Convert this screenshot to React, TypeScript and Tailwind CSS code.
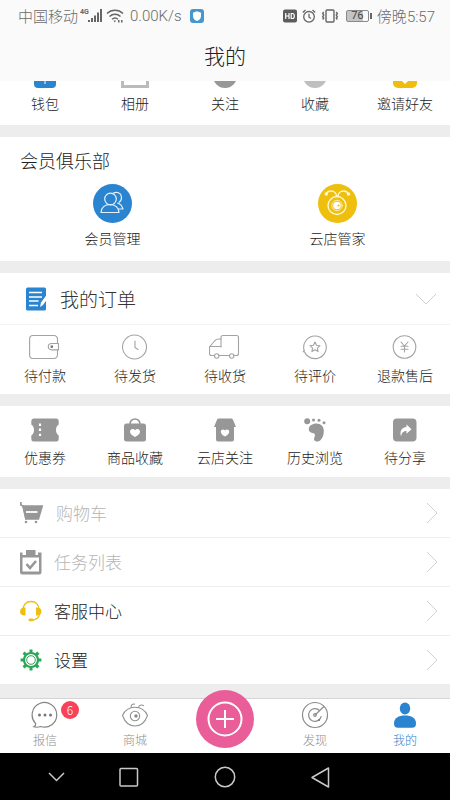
import type { ReactNode } from "react";

type Entry = { label: string; icon: ReactNode };

const line = {
  fill: "none",
  stroke: "#a3a3a3",
  strokeWidth: 1.1,
  strokeLinecap: "round",
  strokeLinejoin: "round",
} as const;

const shortcuts: Entry[] = [
  {
    label: "钱包",
    icon: (
      <svg width="22" height="22" viewBox="0 0 22 22">
        <rect width="22" height="22" rx="4" fill="#2b84d0" />
        <path d="M11 13v5" stroke="#fff" strokeWidth="1" />
      </svg>
    ),
  },
  {
    label: "相册",
    icon: (
      <svg width="28" height="22" viewBox="0 0 28 22">
        <rect x="1.5" y="1.5" width="25" height="19" fill="none" stroke="#bbb" strokeWidth="3" />
      </svg>
    ),
  },
  {
    label: "关注",
    icon: (
      <svg width="24" height="24" viewBox="0 0 24 24">
        <circle cx="12" cy="12" r="12" fill="#979797" />
      </svg>
    ),
  },
  {
    label: "收藏",
    icon: (
      <svg width="24" height="24" viewBox="0 0 24 24">
        <circle cx="12" cy="12" r="12" fill="#bfbfbf" />
      </svg>
    ),
  },
  {
    label: "邀请好友",
    icon: (
      <svg width="24" height="24" viewBox="0 0 24 24">
        <rect width="24" height="24" rx="5" fill="#f0bd0c" />
        <path d="M8 16l4 4 4-4z" fill="#fff" />
      </svg>
    ),
  },
];

const club: Entry[] = [
  {
    label: "会员管理",
    icon: (
      <svg width="40" height="40" viewBox="0 0 40 40">
        <circle cx="19.5" cy="20.5" r="19.5" fill="#2b84d0" />
        <g fill="none" stroke="#e4f1fc" strokeWidth="1.2" strokeLinejoin="round">
          <circle cx="17.500" cy="16" r="5.8" />
          <path d="M8 29.5c0-5 4-8 9-8s9 3 9 8z" />
          <path d="M20 10.3c1.2-.8 2.2-1 3.5-1 3 0 5 2.6 5 5.4 0 2.2-1 3.8-2.7 4.8M24.300 20c3.5.8 4.8 3 5.7 6h-4.8" />
        </g>
      </svg>
    ),
  },
  {
    label: "云店管家",
    icon: (
      <svg width="40" height="40" viewBox="0 0 40 40">
        <circle cx="19.5" cy="20.5" r="19.5" fill="#eebf0d" />
        <g fill="none" stroke="#fff6d2" strokeWidth="1.4" strokeLinecap="round">
          <circle cx="19" cy="22.5" r="9" />
          <circle cx="19" cy="22.5" r="5.2" strokeWidth=".8" />
          <path d="M18.500 13.5c0-3.500-2.500-5.500-5.500-5.500-2.500 0-4 1-5 3M20 13.500c0-3.500 2.500-5.500 5.500-5.500 2.500 0 4 1 5 3" />
        </g>
        <circle cx="19" cy="22.500" r="3.800" fill="#fff" />
        <circle cx="20.500" cy="22.500" r="1.100" fill="#eebf0d" />
        <circle cx="8.300" cy="11" r="1.800" fill="#fff6d2" />
        <circle cx="30.500" cy="11" r="1.800" fill="#fff6d2" />
      </svg>
    ),
  },
];

const orders: Entry[] = [
  {
    label: "待付款",
    icon: (
      <svg width="32" height="26" viewBox="0 0 32 26" {...line}>
        <path d="M28.500 9.500V5a3.500 3.500 0 0 0-3.500-3.500H4A3.500 3.500 0 0 0 .6 5v16A3.500 3.500 0 0 0 4 24.500h21a3.500 3.500 0 0 0 3.500-3.500v-5" />
        <path d="M29.500 9.500h-7a3.200 3.200 0 0 0 0 6.400h7z" />
        <circle cx="22.800" cy="12.700" r=".8" fill="#777" stroke="#777" />
      </svg>
    ),
  },
  {
    label: "待发货",
    icon: (
      <svg width="26" height="26" viewBox="0 0 26 26" {...line}>
        <circle cx="12.500" cy="13" r="12" />
        <path d="M13 7v6.500l3 2" />
      </svg>
    ),
  },
  {
    label: "待收货",
    icon: (
      <svg width="32" height="26" viewBox="0 0 32 26" {...line}>
        <path d="M5.500 21.500H2.500a2 2 0 0 1-2-2V13L6 6.500c1-1 2-1.500 3.500-1.500H12" />
        <path d="M12 13V3.500a2 2 0 0 1 2-2h13.500a2 2 0 0 1 2 2v16a2 2 0 0 1-2 2H25M10 21.500h10.500M.5 12.500H12" />
        <circle cx="7.700" cy="22" r="2.200" />
        <circle cx="22.700" cy="22" r="2.200" />
      </svg>
    ),
  },
  {
    label: "待评价",
    icon: (
      <svg width="26" height="26" viewBox="0 0 26 26" {...line}>
        <path d="M2.300 17A11.300 11.300 0 1 1 6 22.200C4.500 21 3.200 19.500 2.700 18.200c-.3-.5-.8-.6-1.500-.5.800-.6 1-1.500.8-2.700" />
        <path d="m13 8 1.500 3.300 3.500.4-2.600 2.400.7 3.500-3.100-1.800-3.100 1.800.7-3.500L8 11.700l3.500-.4z" />
      </svg>
    ),
  },
  {
    label: "退款售后",
    icon: (
      <svg width="26" height="26" viewBox="0 0 26 26" {...line}>
        <circle cx="12.500" cy="13" r="11.300" />
        <path d="m9 8 3.500 4L16 8M12.500 12v6M9 12.200h7M9 15.200h7" />
      </svg>
    ),
  },
];

const tools: Entry[] = [
  {
    label: "优惠券",
    icon: (
      <svg width="28" height="24" viewBox="0 0 28 24">
        <path d="M3 .5h22A2.500 2.500 0 0 1 27.700 3v3.500C26 7.500 25 9.500 25 12s1 4.500 2.700 5.500V21a2.500 2.500 0 0 1-2.700 2.500H3A2.500 2.500 0 0 1 .3 21v-3.500C2 16.500 3 14.500 3 12S2 7.500.3 6.500V3A2.500 2.500 0 0 1 3 .5z" fill="#979797" />
        <path d="M9 5.500v2.400M9 10.600V13M9 15.700v2.400" stroke="#fff" strokeWidth="2.200" />
      </svg>
    ),
  },
  {
    label: "商品收藏",
    icon: (
      <svg width="22" height="24" viewBox="0 0 22 24">
        <path d="M6 7.500V6a5 5 0 0 1 10 0v1.500" fill="none" stroke="#979797" strokeWidth="1.700" />
        <rect y="5.500" width="22" height="18" rx="2.500" fill="#979797" />
        <path d="M11 19c-3-1.600-5-3.200-5-5.300 0-2.800 3.500-3.500 5-1.400 1.500-2.100 5-1.400 5 1.400 0 2.100-2 3.700-5 5.300z" fill="#fff" />
      </svg>
    ),
  },
  {
    label: "云店关注",
    icon: (
      <svg width="22" height="24" viewBox="0 0 22 24">
        <path d="M5 .5h12a2 2 0 0 1 2 1.200L22 9h-2v12.500a2 2 0 0 1-2 2H4a2 2 0 0 1-2-2V9H0l3-7.300A2 2 0 0 1 5 .5z" fill="#979797" />
        <path d="M11 18.500c-2.600-1.500-4.200-2.900-4.200-4.800 0-2.400 3-3 4.200-1.200 1.200-1.800 4.200-1.200 4.200 1.200 0 1.900-1.600 3.300-4.200 4.800z" fill="#fff" />
      </svg>
    ),
  },
  {
    label: "历史浏览",
    icon: (
      <svg width="22" height="24" viewBox="0 0 22 24" fill="#979797">
        <circle cx="3.200" cy="3.200" r="3" />
        <circle cx="9.500" cy="2" r="1.500" />
        <circle cx="15" cy="2.300" r="1.500" />
        <circle cx="20" cy="4.800" r="1.500" />
        <path d="M12.500 5.500c4.500 0 7.300 3 7.300 7.200 0 4-.8 6.500-2.800 8.800-1.500 1.800-3.500 2.400-5.300 1.800-2-.7-2-2.600-1.200-4.300.7-1.500.8-3.300-1-3.800-2.500-.5-4.700-1.200-4.700-4 0-3.500 3.700-5.700 7.700-5.700z" />
      </svg>
    ),
  },
  {
    label: "待分享",
    icon: (
      <svg width="24" height="24" viewBox="0 0 24 24">
        <rect y=".5" width="23.500" height="23" rx="4" fill="#979797" />
        <path d="M8 18.500c-1.500-5.500.5-9 5.500-9.500V6.500l5 4.700-5 4.500v-2.800c-3 0-4.800 1.600-5.500 5.600z" fill="#fff" />
      </svg>
    ),
  },
];

const rows: (Entry & { muted?: boolean })[] = [
  {
    label: "购物车",
    muted: true,
    icon: (
      <svg width="24" height="22" viewBox="0 0 24 22">
        <path d="M.9 0v3l2.200 1L6 17.500" fill="none" stroke="#979797" strokeWidth="1.700" />
        <path d="M2 3.200h21.300l-4.300 14.500H5.500z" fill="#979797" />
        <path d="M6 10h11.500" stroke="#fff" strokeWidth="1.800" />
        <circle cx="6" cy="20" r="1.300" fill="#979797" />
        <circle cx="16" cy="20" r="1.300" fill="#979797" />
      </svg>
    ),
  },
  {
    label: "任务列表",
    muted: true,
    icon: (
      <svg width="22" height="26" viewBox="0 0 22 26">
        <path d="M0 3.500h2.500V6h3.500V1h9.500v5H18V3.500h3.500V23a2.500 2.500 0 0 1-2.500 2.500H2.500A2.500 2.500 0 0 1 0 23z" fill="#979797" />
        <path d="M2.500 8.500h16.500v14H2.500z" fill="#fff" />
        <path d="m6.500 15 3.500 4 6-7" fill="none" stroke="#979797" strokeWidth="2.600" />
      </svg>
    ),
  },
  {
    label: "客服中心",
    icon: (
      <svg width="22" height="22" viewBox="0 0 22 22" fill="#ebc012">
        <path d="M3 10C3 4.500 6.300 1.500 11 1.500S19 4.500 19 10M19.500 14c-.7 4-3.500 6-8 6" fill="none" stroke="#ebc012" strokeWidth="1.400" />
        <path d="M5.500 7.500v8C2.500 16 0 14.500 0 11.500s2.500-4.500 5.500-4zM16 7.500v8c3 .5 5.500-1 5.500-4s-2.500-4.500-5.500-4z" />
        <rect x="8.500" y="18.500" width="5" height="2.800" rx="1.400" />
      </svg>
    ),
  },
  {
    label: "设置",
    icon: (
      <svg width="22" height="22" viewBox="0 0 22 22" fill="none" stroke="#2aa757">
        <circle cx="11" cy="11" r="7" strokeWidth="2.200" />
        <circle cx="11" cy="11" r="4.300" strokeWidth="1" />
        <path
          d="M11 .6v3.200M11 18.200v3.200M.6 11h3.200M18.200 11h3.200M3.600 3.600l2.300 2.300M16.100 16.100l2.300 2.300M3.600 18.400l2.300-2.300M16.100 5.900l2.300-2.300"
          strokeWidth="3"
        />
      </svg>
    ),
  },
];

const IconCell = ({ label, icon }: Entry) => (
  <button type="button" className="flex flex-col items-center justify-end gap-[5px]">
    {icon}
    <span className="text-sm leading-5">{label}</span>
  </button>
);

const StatusBar = () => (
  <div className="flex h-8 items-center justify-between pl-[18px] pr-[15px] text-[15px] leading-5 text-[#6b6b6b]">
    <div className="flex items-center">
      <span>中国移动</span>
      <svg className="ml-0.5" width="24" height="16" viewBox="0 0 24 16" fill="#666">
        <text x="0" y="6" fontSize="7" fontWeight="700" fontFamily="Roboto">4G</text>
        <path d="M8 12h2v2H8zM11 10h2v4h-2zM14 7.500h2V14h-2zM17 4.500h2V14h-2zM20 1h2v13h-2z" />
      </svg>
      <svg className="ml-0.5" width="18" height="16" viewBox="0 0 18 16">
        <path d="M1 5.500c4.500-4.300 11.500-4.300 16 0M3.500 8.500c3.200-3 7.800-3 11 0M6 11.300c1.800-1.600 4.200-1.600 6 0" fill="none" stroke="#666" strokeWidth="1.500" />
        <path d="M7.500 12.500h2.500L8.800 14.500zM12 12h1.500v2.500H12zM15 12h1.500v2.500H15z" fill="#666" />
      </svg>
      <span className="ml-1.5 font-[Roboto] text-[15px]">0.00K/s</span>
      <svg className="ml-2" width="14" height="14" viewBox="0 0 14 14">
        <rect width="14" height="14" rx="3" fill="#4597cf" />
        <path d="M7 2.200 11 3.700V7c0 2.500-1.700 4.200-4 5-2.300-.8-4-2.500-4-5V3.700z" fill="#fff" />
      </svg>
    </div>
    <div className="flex items-center gap-[5px]">
      <svg width="14" height="14" viewBox="0 0 14 14">
        <rect width="14" height="13" y=".5" rx="2" fill="#5c5c5c" />
        <path d="M2.700 4v6M6 4v6M2.700 7H6M8.200 4.500v5h1.300c1 0 1.800-1 1.800-2.500s-.8-2.500-1.800-2.500z" fill="none" stroke="#fff" strokeWidth="1.200" />
      </svg>
      <svg width="14" height="14" viewBox="0 0 14 14" fill="none" stroke="#666" strokeWidth="1.300">
        <circle cx="7" cy="7.800" r="5.300" />
        <path d="M7 4.800v3.400l2 1.300M.8 3.500l2.700-2.400M13.200 3.500l-2.700-2.400" />
      </svg>
      <svg width="18" height="14" viewBox="0 0 18 14" fill="none" stroke="#666" strokeWidth="1.400">
        <rect x="5" y="1" width="8" height="12" rx="1" />
        <path d="m2.700 3-1 1.500 1 1.500-1 1.500 1 1.500-1 1.500M15.300 3l1 1.500-1 1.500 1 1.500-1 1.500 1 1.500" />
      </svg>
      <div className="ml-0.5 flex items-center gap-px">
        <span className="flex h-3 w-[23px] items-center justify-center rounded-xs border border-[#8a8a8a] bg-linear-to-r from-[#c4c4c4] from-75% to-[#fafafa] to-75% font-[Roboto] text-[11px] font-normal leading-3 text-[#444]">
          76
        </span>
        <span className="h-1.5 w-0.5 bg-[#666]" />
      </div>
      <span>
        傍晚<span className="font-[Roboto]">5:57</span>
      </span>
    </div>
  </div>
);

const TabBar = () => (
  <nav className="grid h-[55px] grid-cols-5 border-t border-[#d5d5d5] bg-white text-xs leading-4 text-[#8e8e8e]">
    <button type="button" className="flex flex-col items-center gap-[3px] pt-0.5">
      <span className="relative">
        <svg width="28" height="28" viewBox="0 0 28 28" fill="none" stroke="#858585" strokeWidth="1.200">
          <path d="M2.800 25.800c1.500-.8 2.200-2 1.700-3.500A12.300 12.300 0 1 1 9.500 25.500c-2 .8-4.500 1-6.700.3z" />
          <g fill="#777" stroke="none">
            <circle cx="8.500" cy="14" r="1.500" />
            <circle cx="14" cy="14" r="1.500" />
            <circle cx="19.500" cy="14" r="1.500" />
          </g>
        </svg>
        <span className="absolute -right-5 top-0 flex size-[18px] items-center justify-center rounded-full bg-[#f9425a] text-xs text-white">
          6
        </span>
      </span>
      报信
    </button>
    <button type="button" className="flex flex-col items-center gap-[3px] pt-0.5">
      <svg width="28" height="28" viewBox="0 0 28 28" fill="none" stroke="#929292" strokeWidth="1.100">
        <path d="M1.500 14.500C4 9 8.500 6.300 14 6.300S24 9 26.500 14.500C24 21.500 19.500 25 14 25S4 21.500 1.500 14.500z" />
        <circle cx="14" cy="15" r="4.700" />
        <path d="M10 6.500C10 4 11.500 2.500 14 3.200M17.500 6.300c.5-2 2.500-3 5.500-1.600" />
        <circle cx="15" cy="15" r="1.200" fill="#777" />
      </svg>
      商城
    </button>
    <button
      type="button"
      aria-label="发布"
      className="-mt-[9px] flex size-[58px] items-center justify-center justify-self-center rounded-full bg-[#e95d99]"
    >
      <svg width="36" height="36" viewBox="0 0 36 36" fill="none" stroke="#fff" strokeWidth="2">
        <circle cx="18" cy="18" r="16.500" />
        <path d="M18 9v18M9 18h18" />
      </svg>
    </button>
    <button type="button" className="flex flex-col items-center gap-[3px] pt-0.5">
      <svg width="28" height="28" viewBox="0 0 28 28" fill="none" stroke="#8c8c8c" strokeWidth="1.200">
        <circle cx="14" cy="14" r="12.500" />
        <path d="M18.500 9.500a6.400 6.400 0 1 0 1.800 5.500" />
        <path d="m14 14 9-8.500" />
        <circle cx="14" cy="14" r="1.300" />
        <circle cx="18" cy="19" r="1.100" fill="#777" stroke="none" />
      </svg>
      发现
    </button>
    <button type="button" className="flex flex-col items-center gap-[3px] pt-0.5 text-[#2b84d0]">
      <svg width="28" height="28" viewBox="0 0 28 28" fill="#2b84d0">
        <ellipse cx="14" cy="7.500" rx="5.200" ry="6" />
        <path d="M3 22.500c0-5.500 4.500-8 11-8s11 2.500 11 8c0 3-1.300 4.200-4 4.200H7c-2.700 0-4-1.200-4-4.200z" />
      </svg>
      我的
    </button>
  </nav>
);

export default function App() {
  return (
    <div className="flex min-h-screen flex-col bg-[#ededed] font-['Noto_Sans_CJK_SC',sans-serif] font-light text-[#222]">
      <header className="bg-[#fafafa]">
        <StatusBar />
        <h1 className="pb-2.5 pt-[7px] text-center text-[21px] leading-8">我的</h1>
      </header>

      <main className="flex flex-1 flex-col gap-3">
        <section className="grid h-11 grid-cols-5 content-end overflow-hidden bg-white pb-3">
          {shortcuts.map((item) => (
            <IconCell key={item.label} {...item} />
          ))}
        </section>

        <section className="bg-white pb-[13px]">
          <h2 className="px-5 py-[9px] text-lg leading-7">会员俱乐部</h2>
          <div className="grid grid-cols-2">
            {club.map((item) => (
              <IconCell key={item.label} {...item} />
            ))}
          </div>
        </section>

        <section className="bg-white">
          <button
            type="button"
            className="flex h-[52px] w-full items-center border-b border-[#f2f2f2] pl-[26px] pr-[13px] text-[#333]"
          >
            <svg width="22" height="24" viewBox="0 0 22 24">
              <rect y=".5" width="20" height="23" rx="1.500" fill="#2b84d0" />
              <path d="M3 5.500h13M3 10h13M3 14h9.500M3 18.500h9" stroke="#fff" strokeWidth="1.500" />
              <path d="m14 20 1-4.500L20.500 8l2.500 2-6 8z" fill="#fff" />
            </svg>
            <span className="ml-3 text-[19px] leading-7">我的订单</span>
            <svg className="ml-auto" width="22" height="12" viewBox="0 0 22 12" fill="none" stroke="#cfcfcf">
              <path d="m1 1 10 10L21 1" />
            </svg>
          </button>
          <div className="grid grid-cols-5 py-[9px]">
            {orders.map((item) => (
              <IconCell key={item.label} {...item} />
            ))}
          </div>
        </section>

        <section className="grid grid-cols-5 bg-white pb-2.5 pt-3">
          {tools.map((item) => (
            <IconCell key={item.label} {...item} />
          ))}
        </section>

        <ul className="bg-white">
          {rows.map(({ label, icon, muted }) => (
            <li key={label} className="border-b border-[#ededed]">
              <button type="button" className="flex h-12 w-full items-center gap-3 pl-5 pr-3">
                {icon}
                <span className={muted ? "text-[17px] leading-6 text-[#b5b5b5]" : "text-[17px] leading-6"}>
                  {label}
                </span>
                <svg className="ml-auto" width="12" height="22" viewBox="0 0 12 22" fill="none" stroke="#d2d2d2">
                  <path d="m1 1 10 10L1 21" />
                </svg>
              </button>
            </li>
          ))}
        </ul>
      </main>

      <footer className="mt-3">
        <TabBar />
        <div className="flex h-[47px] items-center bg-black">
          <svg className="w-full" height="30" viewBox="0 0 450 30" fill="none" stroke="#c9c9c9" strokeWidth="1.500">
            <path d="m49 11 7.500 7.500L64 11" />
            <rect x="120" y="6.500" width="17.500" height="17.500" rx="1" />
            <circle cx="225" cy="15" r="9.700" />
            <path d="M328.500 6v19L312 15.500z" strokeLinejoin="round" />
          </svg>
        </div>
      </footer>
    </div>
  );
}
